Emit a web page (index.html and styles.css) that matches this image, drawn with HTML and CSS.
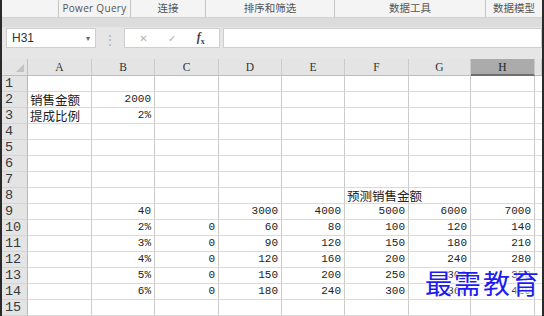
FILE: index.html
```html
<!DOCTYPE html>
<html lang="zh-CN">
<head>
    <meta charset="UTF-8">
    <title>销售提成</title>
    <link rel="stylesheet" href="styles.css">
</head>
<body>
    <div class="frame">
        <div class="ribbon">
            <div class="group first"></div>
            <div class="group w-pq latin">Power Query</div>
            <div class="group w-link">连接</div>
            <div class="group w-sort">排序和筛选</div>
            <div class="group w-tools">数据工具</div>
            <div class="group w-model">数据模型</div>
        </div>
        <div class="band"></div>

        <div class="formula-bar">
            <div class="name-box">
                <span>H31</span>
                <span class="arrow">&#9662;</span>
            </div>
            <div class="dots">&#8942;</div>
            <div class="fx-box">
                <span class="icon cancel">&#10005;</span>
                <span class="icon enter">&#10003;</span>
                <span class="icon fx"><i>f</i><sub>x</sub></span>
            </div>
            <div class="formula-input"></div>
        </div>

        <div class="sheet" id="sheet"></div>

        <div class="watermark">最需教育</div>
    </div>

    <script>
        let columns = ["A", "B", "C", "D", "E", "F", "G", "H"];

        // row number -> cells by column letter
        let data = {
            2: { A: "销售金额", B: "2000" },
            3: { A: "提成比例", B: "2%" },
            8: { F: "预测销售金额" },
            9: { B: "40", D: "3000", E: "4000", F: "5000", G: "6000", H: "7000" },
            10: { B: "2%", C: "0", D: "60", E: "80", F: "100", G: "120", H: "140" },
            11: { B: "3%", C: "0", D: "90", E: "120", F: "150", G: "180", H: "210" },
            12: { B: "4%", C: "0", D: "120", E: "160", F: "200", G: "240", H: "280" },
            13: { B: "5%", C: "0", D: "150", E: "200", F: "250", G: "300", H: "350" },
            14: { B: "6%", C: "0", D: "180", E: "240", F: "300", G: "360", H: "420" }
        };

        function cell(cls, text) {
            let div = document.createElement("div");
            div.className = cls;
            if (text) div.textContent = text;
            return div;
        }

        function buildSheet() {
            let sheet = document.getElementById("sheet");

            sheet.appendChild(cell("corner"));
            columns.forEach(col => {
                sheet.appendChild(cell(col === "H" ? "col-head active" : "col-head", col));
            });
            sheet.appendChild(cell("col-head rest"));

            for (let r = 1; r <= 15; r++) {
                sheet.appendChild(cell("row-head", String(r)));
                let row = data[r] || {};
                columns.forEach(col => {
                    let value = row[col];
                    let cls = "cell";
                    if (value) {
                        cls += /^[0-9%]+$/.test(value) ? " num" : " text";
                    }
                    sheet.appendChild(cell(cls, value));
                });
                sheet.appendChild(cell("cell rest"));
            }
        }
        buildSheet();
    </script>
</body>
</html>
```

FILE: styles.css
```css
body {
    margin: 0;
    width: 544px;
    height: 316px;
    overflow: hidden;
    background: #ffffff;
    font-family: "Noto Sans CJK SC", "Liberation Sans", sans-serif;
}
.frame {
    position: relative;
    height: 316px;
    overflow: hidden;
    border-left: 2px solid #2a2a2a;
    border-right: 2px solid #2a2a2a;
    background: #e6e6e6;
}

/* ribbon group labels */
.ribbon {
    display: flex;
    height: 17px;
    background: #f4f4f4;
    border-bottom: 1px solid #d2d2d2;
    font-size: 10.5px;
    color: #555555;
    line-height: 16px;
}
.group {
    text-align: center;
    border-left: 1px solid #c4c4c4;
    white-space: nowrap;
}
.group.first {
    width: 56px;
    border-left: none;
}
.latin {
    font-family: "Open Sans", "Liberation Sans", sans-serif;
    font-size: 10px;
    letter-spacing: 0.3px;
}
.w-pq { width: 71px; }
.w-link { width: 74px; }
.w-sort { width: 128px; }
.w-tools { width: 150px; }
.w-model { flex: 1; }
.band {
    height: 9px;
    background: #dcdcdc;
}

/* formula bar */
.formula-bar {
    display: flex;
    align-items: center;
    height: 22px;
    padding: 0 0 0 4px;
    background: #e6e6e6;
}
.name-box {
    display: flex;
    justify-content: space-between;
    align-items: center;
    width: 90px;
    height: 20px;
    box-sizing: border-box;
    padding: 0 5px 0 5px;
    background: #ffffff;
    border: 1px solid #cfcfcf;
    font-family: "Liberation Sans", sans-serif;
    font-size: 12px;
    color: #333333;
}
.arrow {
    font-size: 8px;
    color: #666666;
}
.dots {
    width: 28px;
    text-align: center;
    color: #b0b0b0;
    font-size: 12px;
}
.fx-box {
    display: flex;
    align-items: center;
    justify-content: space-around;
    width: 96px;
    height: 20px;
    box-sizing: border-box;
    background: #ffffff;
    border: 1px solid #cfcfcf;
    padding: 0 4px;
}
.icon {
    font-family: "DejaVu Sans", sans-serif;
    font-size: 10px;
    color: #b5b5b5;
}
.icon.fx {
    font-family: "Liberation Serif", serif;
    font-size: 12px;
    color: #444444;
    font-weight: bold;
}
.icon.fx sub {
    font-size: 8px;
}
.formula-input {
    flex: 1;
    height: 20px;
    margin-left: 3px;
    background: #ffffff;
    border: 1px solid #cfcfcf;
    box-sizing: border-box;
}

/* worksheet grid */
.sheet {
    display: grid;
    grid-template-columns: 26px 64px 63px 64px 63px 63px 64px 62px 64px 1fr;
    grid-template-rows: 17px repeat(15, 16px);
    margin-top: 10px;
    background: #ffffff;
}
.corner {
    background: #e4e4e4;
    border-right: 1px solid #c0c0c0;
    border-bottom: 1px solid #bdbdbd;
    position: relative;
}
.corner::after {
    content: "";
    position: absolute;
    right: 3px;
    bottom: 3px;
    border-left: 8px solid transparent;
    border-bottom: 8px solid #c2c2c2;
}
.col-head {
    background: #e4e4e4;
    border-right: 1px solid #cccccc;
    border-bottom: 1px solid #bdbdbd;
    text-align: center;
    font-family: "Liberation Serif", serif;
    font-size: 11.5px;
    line-height: 17px;
    color: #333333;
}
.col-head.active {
    background: #ababab;
    border-bottom: 2px solid #6f6f6f;
    color: #222222;
}
.row-head {
    background: #e4e4e4;
    border-right: 1px solid #b8b8b8;
    border-bottom: 1px solid #d4d4d4;
    font-family: "Liberation Mono", monospace;
    font-size: 13.5px;
    line-height: 16px;
    padding-left: 3px;
    color: #3a3a3a;
}
.cell {
    border-right: 1px solid #cbcbcb;
    border-bottom: 1px solid #dadada;
    white-space: nowrap;
    color: #222222;
    line-height: 15px;
}
.cell.rest {
    border-right: none;
}
.cell.num {
    text-align: right;
    padding-right: 3px;
    font-family: "Liberation Mono", monospace;
    font-size: 11px;
}
.cell.text {
    padding-left: 2px;
    font-size: 12.5px;
    overflow: visible;
}

/* watermark stamp */
.watermark {
    position: absolute;
    left: 423px;
    top: 268px;
    font-family: "Noto Sans CJK SC", sans-serif;
    font-size: 27px;
    line-height: 30px;
    letter-spacing: 2px;
    color: #1c1cf0;
    text-shadow: 0 0 2px #ffffff, 0 0 4px #ffffff, 0 0 4px #ffffff;
}
```
